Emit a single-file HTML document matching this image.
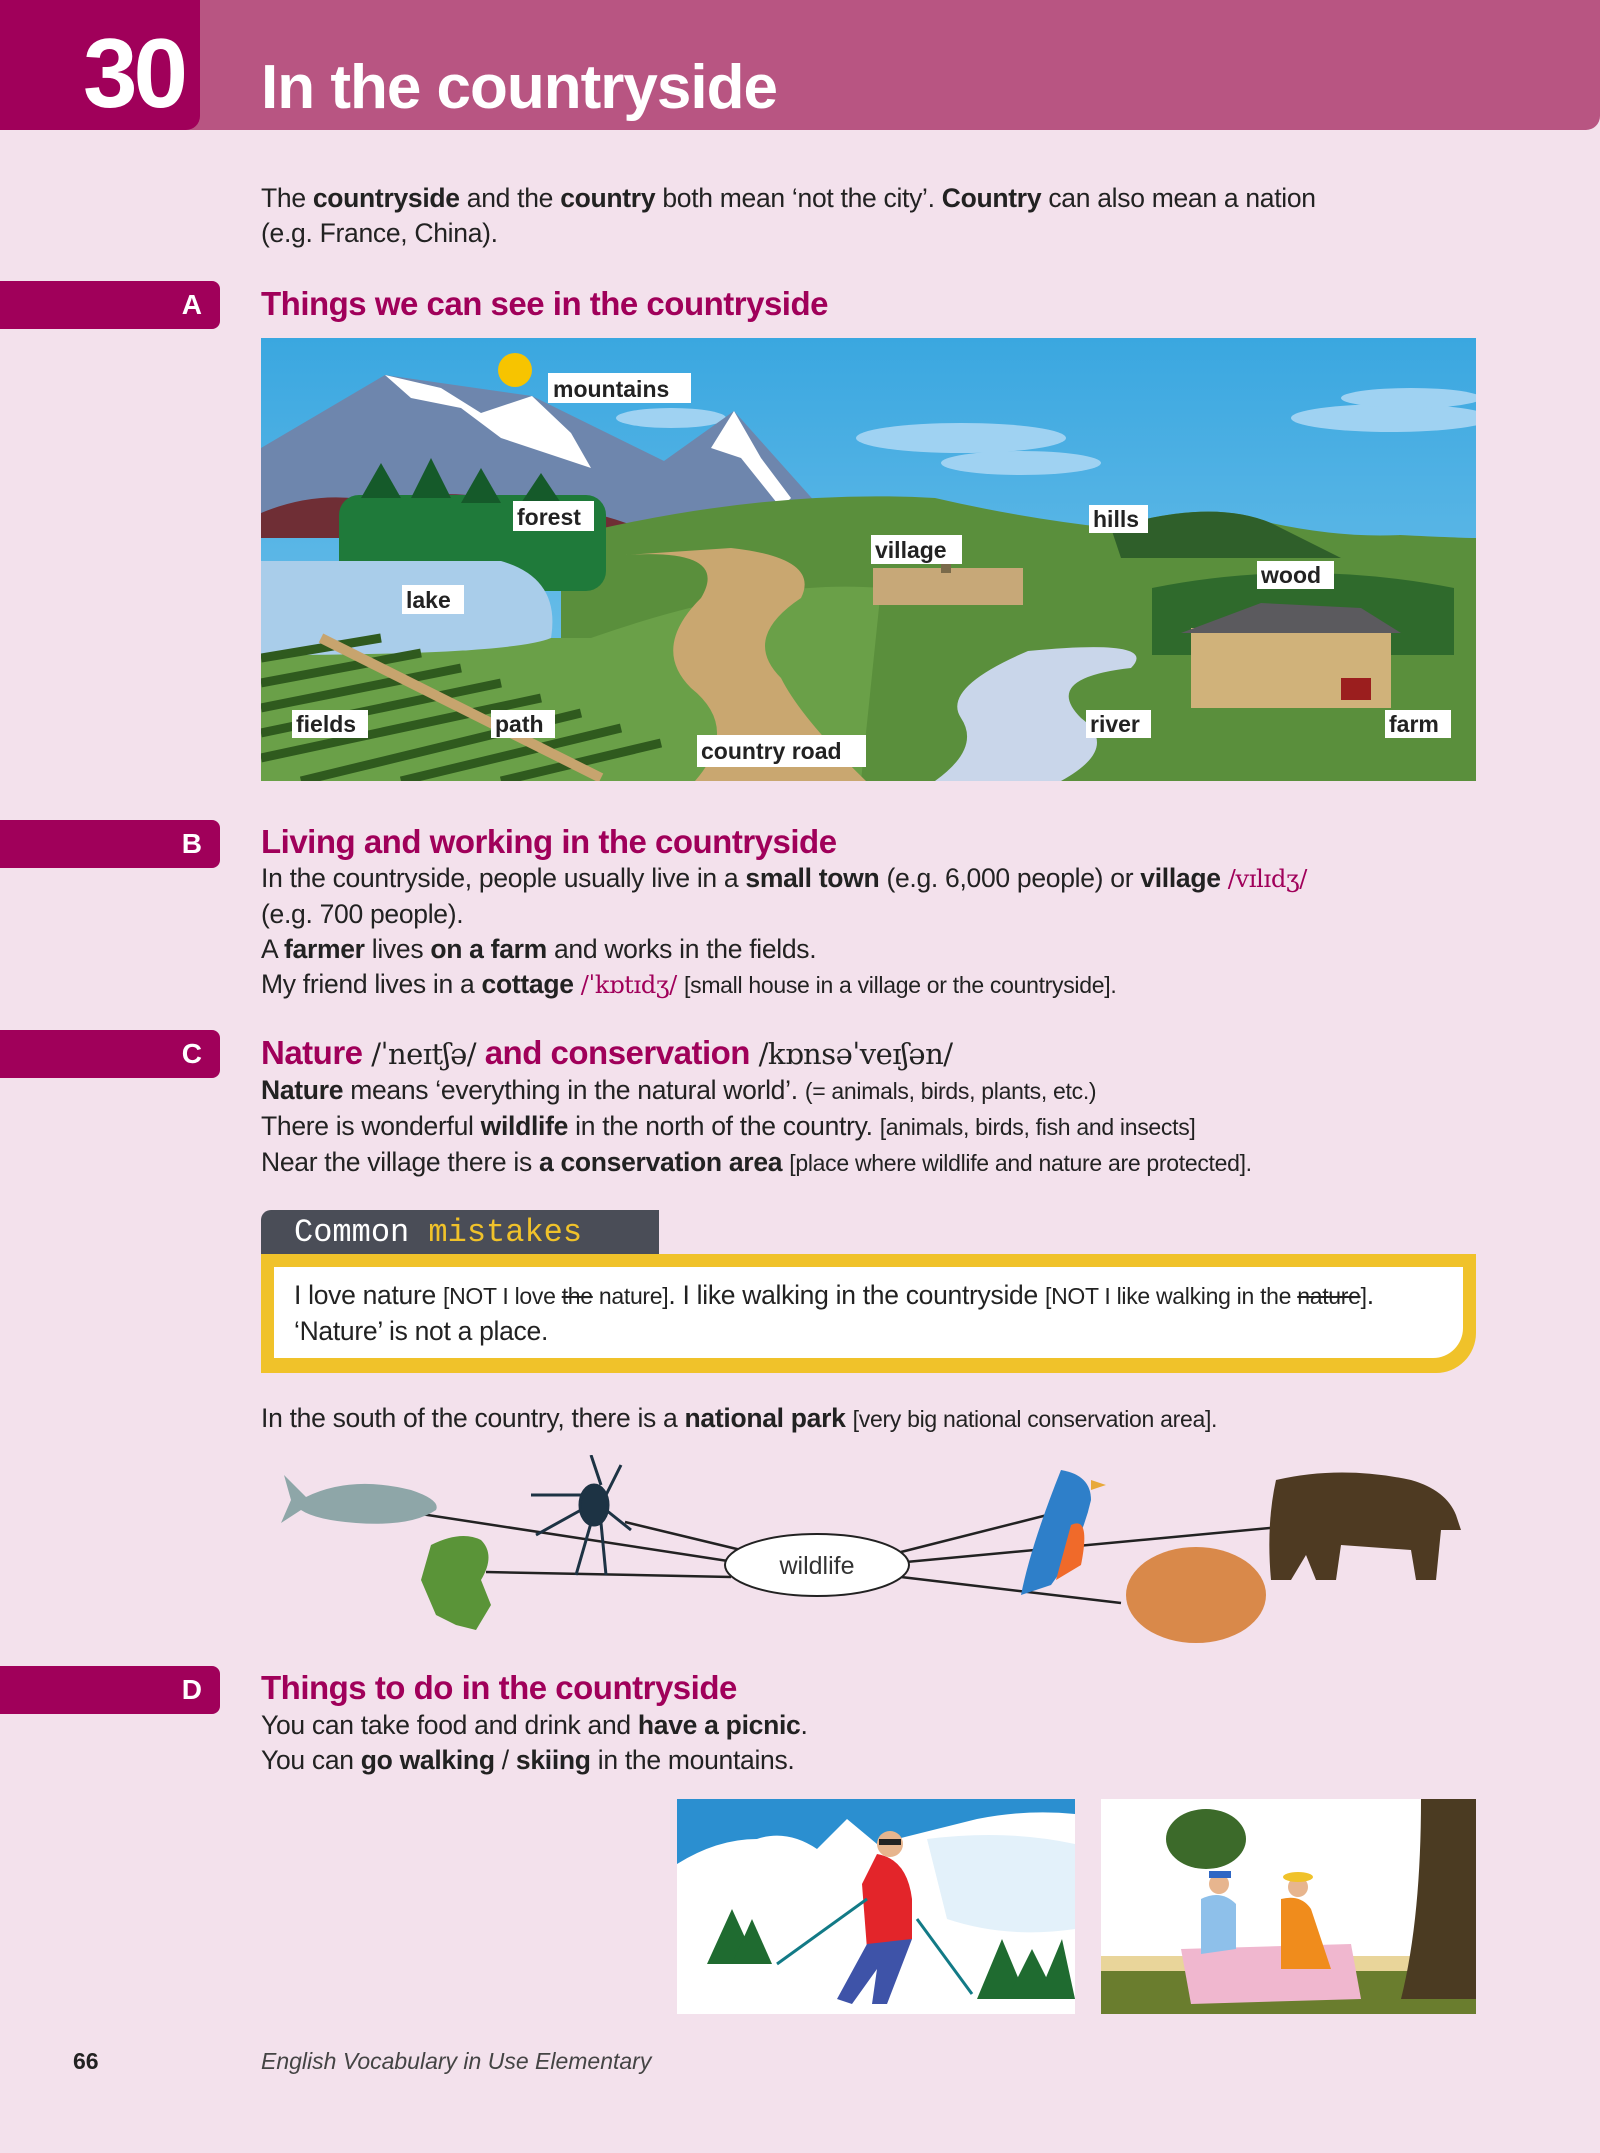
<!DOCTYPE html>
<html><head><meta charset="utf-8">
<style>
*{margin:0;padding:0;box-sizing:border-box}
body{width:1600px;height:2153px;background:#f3e1ec;font-family:"Liberation Sans",sans-serif;color:#222;position:relative;overflow:hidden}
.abs{position:absolute}
.hdr{left:0;top:0;width:1600px;height:130px;background:#b85582;border-radius:0 0 14px 0}
.num{left:0;top:0;width:200px;height:130px;background:#a0005a;border-radius:0 0 14px 0;color:#fff;font-weight:bold;font-size:98px;line-height:130px;text-align:right;padding-right:16px;letter-spacing:-4px;padding-top:8px}
.title{left:261px;top:52px;color:#fff;font-weight:bold;font-size:62px;letter-spacing:-1px}
.txt{font-size:26.5px;line-height:35px;letter-spacing:-0.3px}
.bar{left:0;width:220px;height:48px;background:#a0005a;border-radius:0 8px 8px 0;color:#fff;font-weight:bold;font-size:28px;text-align:right;padding-right:18px;line-height:48px}
.h{left:261px;color:#a0005a;font-weight:bold;font-size:33px;letter-spacing:-0.5px}
.ph{color:#a0005a;font-family:"DejaVu Serif",serif;font-size:24px}
.ph2{color:#222;font-family:"DejaVu Serif",serif;font-size:29px;font-weight:normal}
b{font-weight:bold}
.small{font-size:23px}
</style></head><body>
<div class="abs hdr"></div>
<div class="abs num">30</div>
<div class="abs title">In the countryside</div>

<div class="abs txt" style="left:261px;top:181px">The <b>countryside</b> and the <b>country</b> both mean ‘not the city’. <b>Country</b> can also mean a nation<br>(e.g. France, China).</div>

<div class="abs bar" style="top:281px">A</div>
<div class="abs h" style="top:285px">Things we can see in the countryside</div>

<svg class="abs" style="left:261px;top:338px" width="1215" height="443" viewBox="0 0 1215 443">
<defs><linearGradient id="sky" x1="0" y1="0" x2="0" y2="1"><stop offset="0" stop-color="#3aa7e0"/><stop offset="1" stop-color="#7cc6ec"/></linearGradient></defs>
<rect width="1215" height="443" fill="url(#sky)"/>
<g fill="#9fd2f2"><ellipse cx="700" cy="100" rx="105" ry="15"/><ellipse cx="760" cy="125" rx="80" ry="12"/><ellipse cx="1130" cy="80" rx="100" ry="14"/><ellipse cx="1150" cy="60" rx="70" ry="10"/><ellipse cx="410" cy="80" rx="55" ry="10"/></g>
<circle cx="254" cy="32" r="17" fill="#f7c400"/>
<polygon points="0,110 124,37 271,58 403,123 473,73 573,185 0,185" fill="#6e86ad"/>
<polygon points="124,37 150,60 200,70 240,100 300,120 330,130 310,95 271,58 220,75 180,50" fill="#fff"/>
<polygon points="473,73 500,120 530,160 520,170 480,120 450,110" fill="#fff"/>
<path d="M0 175 Q60 150 120 165 Q200 145 260 170 Q330 165 400 200 L0 200Z" fill="#6f2e35"/>
<path d="M300 200 Q500 150 674 160 Q760 180 850 190 Q950 160 1010 185 Q1080 200 1139 197 Q1200 200 1215 200 L1215 443 L300 443Z" fill="#5a8f3c"/>
<path d="M850 190 Q950 160 1010 185 Q1060 210 1080 220 L860 220Z" fill="#2f5f2a"/>
<path d="M330 300 Q500 240 620 250 L600 443 L0 443 L0 300Z" fill="#6aa048"/>
<rect x="78" y="157" width="267" height="96" fill="#1f7a3a" rx="20"/>
<g fill="#155a2a"><polygon points="100,160 120,125 140,160"/><polygon points="150,160 170,120 190,160"/><polygon points="200,165 220,130 240,165"/><polygon points="260,165 280,135 300,165"/></g>
<path d="M0 223 L240 223 Q300 240 290 300 Q250 317 0 317Z" fill="#a9cdea"/>
<g stroke="#2f5a1e" stroke-width="9">
<line x1="0" y1="320" x2="120" y2="300"/><line x1="0" y1="345" x2="160" y2="315"/><line x1="0" y1="370" x2="200" y2="330"/><line x1="0" y1="395" x2="240" y2="345"/><line x1="0" y1="420" x2="280" y2="360"/><line x1="40" y1="443" x2="320" y2="375"/><line x1="140" y1="443" x2="360" y2="390"/><line x1="240" y1="443" x2="400" y2="405"/></g>
<path d="M60 300 L340 440" stroke="#c7a46e" stroke-width="10"/>
<path d="M364 217 Q470 210 440 260 Q390 310 430 350 Q480 390 434 443 L605 443 Q540 380 520 340 Q480 300 540 260 Q560 220 470 210Z" fill="#c9a770"/>
<path d="M767 313 Q900 300 870 330 Q780 340 820 380 Q860 410 800 443 L674 443 Q720 410 700 380 Q680 350 767 313Z" fill="#c9d6ea"/>
<rect x="612" y="230" width="150" height="37" fill="#c7a878"/><rect x="680" y="205" width="10" height="30" fill="#7a6a4a"/>
<path d="M891 250 Q1040 220 1193 250 L1193 317 L891 317Z" fill="#2f6a2c"/>
<rect x="930" y="290" width="200" height="80" fill="#d0b27a"/><polygon points="920,295 1000,265 1100,270 1140,295" fill="#5b5a5e"/><rect x="1080" y="340" width="30" height="22" fill="#9b1e1e"/>
<g fill="#fff" font-family="Liberation Sans,sans-serif" font-weight="bold" font-size="23">
<rect x="287" y="35" width="143" height="30"/><rect x="252" y="163" width="81" height="30"/><rect x="141" y="247" width="62" height="29"/><rect x="610" y="197" width="91" height="29"/><rect x="828" y="167" width="59" height="28"/><rect x="996" y="223" width="77" height="28"/><rect x="31" y="372" width="76" height="28"/><rect x="230" y="372" width="64" height="28"/><rect x="436" y="397" width="169" height="32"/><rect x="825" y="372" width="65" height="28"/><rect x="1124" y="372" width="66" height="28"/>
<g fill="#222"><text x="292" y="59">mountains</text><text x="256" y="187">forest</text><text x="145" y="270">lake</text><text x="614" y="220">village</text><text x="832" y="189">hills</text><text x="1000" y="245">wood</text><text x="35" y="394">fields</text><text x="234" y="394">path</text><text x="440" y="421">country road</text><text x="829" y="394">river</text><text x="1128" y="394">farm</text></g></g>
</svg>

<div class="abs bar" style="top:820px">B</div>
<div class="abs h" style="top:823px">Living and working in the countryside</div>
<div class="abs txt" style="left:261px;top:861px">In the countryside, people usually live in a <b>small town</b> (e.g. 6,000 people) or <b>village</b> <span class="ph">/vɪlɪdʒ/</span><br>(e.g. 700 people).<br>A <b>farmer</b> lives <b>on a farm</b> and works in the fields.<br>My friend lives in a <b>cottage</b> <span class="ph">/ˈkɒtɪdʒ/</span> <span class="small">[small house in a village or the countryside].</span></div>

<div class="abs bar" style="top:1030px">C</div>
<div class="abs h" style="top:1034px">Nature <span class="ph2">/ˈneɪtʃə/</span> and conservation <span class="ph2">/kɒnsəˈveɪʃən/</span></div>
<div class="abs txt" style="left:261px;top:1073px"><b>Nature</b> means ‘everything in the natural world’. <span class="small">(= animals, birds, plants, etc.)</span><br>There is wonderful <b>wildlife</b> in the north of the country. <span class="small">[animals, birds, fish and insects]</span><br>Near the village there is <b>a conservation area</b> <span class="small">[place where wildlife and nature are protected].</span></div>

<div class="abs" style="left:261px;top:1210px;width:398px;height:44px;background:#4a4d57;border-radius:10px 0 0 0;color:#fff;font-family:'Liberation Mono',monospace;font-size:32px;line-height:46px;padding-left:33px">Common <span style="color:#f0c22a">mistakes</span></div>
<div class="abs" style="left:261px;top:1254px;width:1215px;height:119px;background:#f0c22a;border-radius:0 0 40px 0"></div>
<div class="abs" style="left:274px;top:1267px;width:1189px;height:91px;background:#fff;border-radius:0 0 30px 0"></div>
<div class="abs txt" style="left:294px;top:1278px">I love nature <span class="small">[NOT I love <s>the</s> nature]</span>. I like walking in the countryside <span class="small">[NOT I like walking in the <s>nature</s>]</span>.<br>‘Nature’ is not a place.</div>

<div class="abs txt" style="left:261px;top:1401px">In the south of the country, there is a <b>national park</b> <span class="small">[very big national conservation area].</span></div>

<svg class="abs" style="left:261px;top:1455px" width="1215" height="190" viewBox="0 0 1215 190">
<g stroke="#222" stroke-width="2.5"><line x1="147" y1="57" x2="480" y2="108"/><line x1="364" y1="67" x2="480" y2="95"/><line x1="225" y1="117" x2="470" y2="122"/><line x1="806" y1="55" x2="640" y2="97"/><line x1="1019" y1="72" x2="645" y2="107"/><line x1="860" y1="148" x2="640" y2="122"/></g>
<ellipse cx="556" cy="110" rx="92" ry="31" fill="#fff" stroke="#222" stroke-width="2"/>
<text x="556" y="119" text-anchor="middle" font-size="25" fill="#333" font-family="Liberation Sans,sans-serif">wildlife</text>
<path d="M23 20 L45 42 Q90 20 150 35 Q180 45 175 55 Q150 72 95 68 Q55 65 40 55 L20 68 L30 45Z" fill="#8ea6a8"/>
<g stroke="#1d3344" stroke-width="3" fill="none"><ellipse cx="333" cy="50" rx="14" ry="20" fill="#1d3344"/><path d="M320 40 L270 40 M320 55 L275 80 M330 68 L315 120 M340 68 L345 120 M345 40 L360 10 M340 30 L330 0 M345 55 L370 75"/></g>
<path d="M170 90 Q200 75 220 85 Q235 100 220 125 L230 150 L215 175 L195 170 L175 160 L160 125Z" fill="#5a9438"/>
<path d="M800 15 Q830 20 830 45 Q820 90 790 130 L760 140 Q770 90 800 15Z" fill="#2e7fc9"/><path d="M810 70 Q830 60 820 110 L795 125Z" fill="#f06a2a"/><path d="M830 25 L845 30 L830 35Z" fill="#e8a93a"/>
<ellipse cx="935" cy="140" rx="70" ry="48" fill="#d9894a"/>
<path d="M1015 25 Q1080 10 1150 25 Q1185 35 1195 60 L1200 75 L1180 75 L1175 125 L1155 125 L1150 95 L1080 90 L1075 125 L1055 125 L1045 100 L1030 125 L1010 125 Q1005 70 1015 25Z" fill="#4e3a22"/>
</svg>

<div class="abs bar" style="top:1666px">D</div>
<div class="abs h" style="top:1669px">Things to do in the countryside</div>
<div class="abs txt" style="left:261px;top:1708px">You can take food and drink and <b>have a picnic</b>.<br>You can <b>go walking</b> / <b>skiing</b> in the mountains.</div>

<svg class="abs" style="left:677px;top:1799px" width="398" height="215" viewBox="0 0 398 215">
<rect width="398" height="215" fill="#fff"/>
<rect width="398" height="75" fill="#2b8fd0"/>
<path d="M0 65 Q40 40 80 40 Q110 30 140 50 L170 20 L200 45 Q260 30 300 20 Q350 10 398 15 L398 215 L0 215Z" fill="#fff"/>
<path d="M250 40 Q330 30 398 45 L398 130 Q330 140 270 120Z" fill="#e3f1fa"/>
<g fill="#1f6b30"><polygon points="30,165 55,110 80,165"/><polygon points="55,165 75,120 95,165"/><polygon points="300,200 325,140 350,200"/><polygon points="330,200 355,150 380,200"/><polygon points="360,200 385,140 398,200"/></g>
<path d="M200 55 Q230 60 235 100 L235 140 L190 150 L185 85Z" fill="#e3252a"/>
<circle cx="213" cy="45" r="13" fill="#e7b58e"/><rect x="202" y="40" width="22" height="6" fill="#222"/>
<path d="M190 145 L235 140 L210 205 L195 205 L200 170 L175 205 L160 200Z" fill="#3e53a8"/>
<g stroke="#127a86" stroke-width="3"><line x1="190" y1="100" x2="100" y2="165"/><line x1="240" y1="120" x2="295" y2="195"/></g>
</svg>
<svg class="abs" style="left:1101px;top:1799px" width="375" height="215" viewBox="0 0 375 215">
<rect width="375" height="215" fill="#fff"/>
<path d="M0 170 Q100 160 375 165 L375 215 L0 215Z" fill="#6a7d2e"/>
<rect x="0" y="157" width="375" height="15" fill="#e9d59a"/>
<path d="M320 0 L375 0 L375 200 L300 200 Q320 120 320 0Z" fill="#4b3b22"/>
<ellipse cx="105" cy="40" rx="40" ry="30" fill="#3c6a2a"/>
<path d="M80 150 L250 145 L260 200 L90 205Z" fill="#f0b7cf"/>
<path d="M100 100 Q120 90 135 105 L135 150 L100 155Z" fill="#8ec0ea"/><circle cx="118" cy="85" r="10" fill="#e7b58e"/><rect x="108" y="72" width="22" height="7" fill="#2f67c4"/>
<path d="M180 100 Q200 95 210 110 L230 170 L180 170Z" fill="#f08c1c"/><circle cx="197" cy="88" r="10" fill="#e7b58e"/><ellipse cx="197" cy="78" rx="15" ry="5" fill="#f0c22a"/>
</svg>

<div class="abs" style="left:73px;top:2048px;font-size:23px;font-weight:bold">66</div>
<div class="abs" style="left:261px;top:2048px;font-size:23px;font-style:italic;color:#444">English Vocabulary in Use Elementary</div>
</body></html>
